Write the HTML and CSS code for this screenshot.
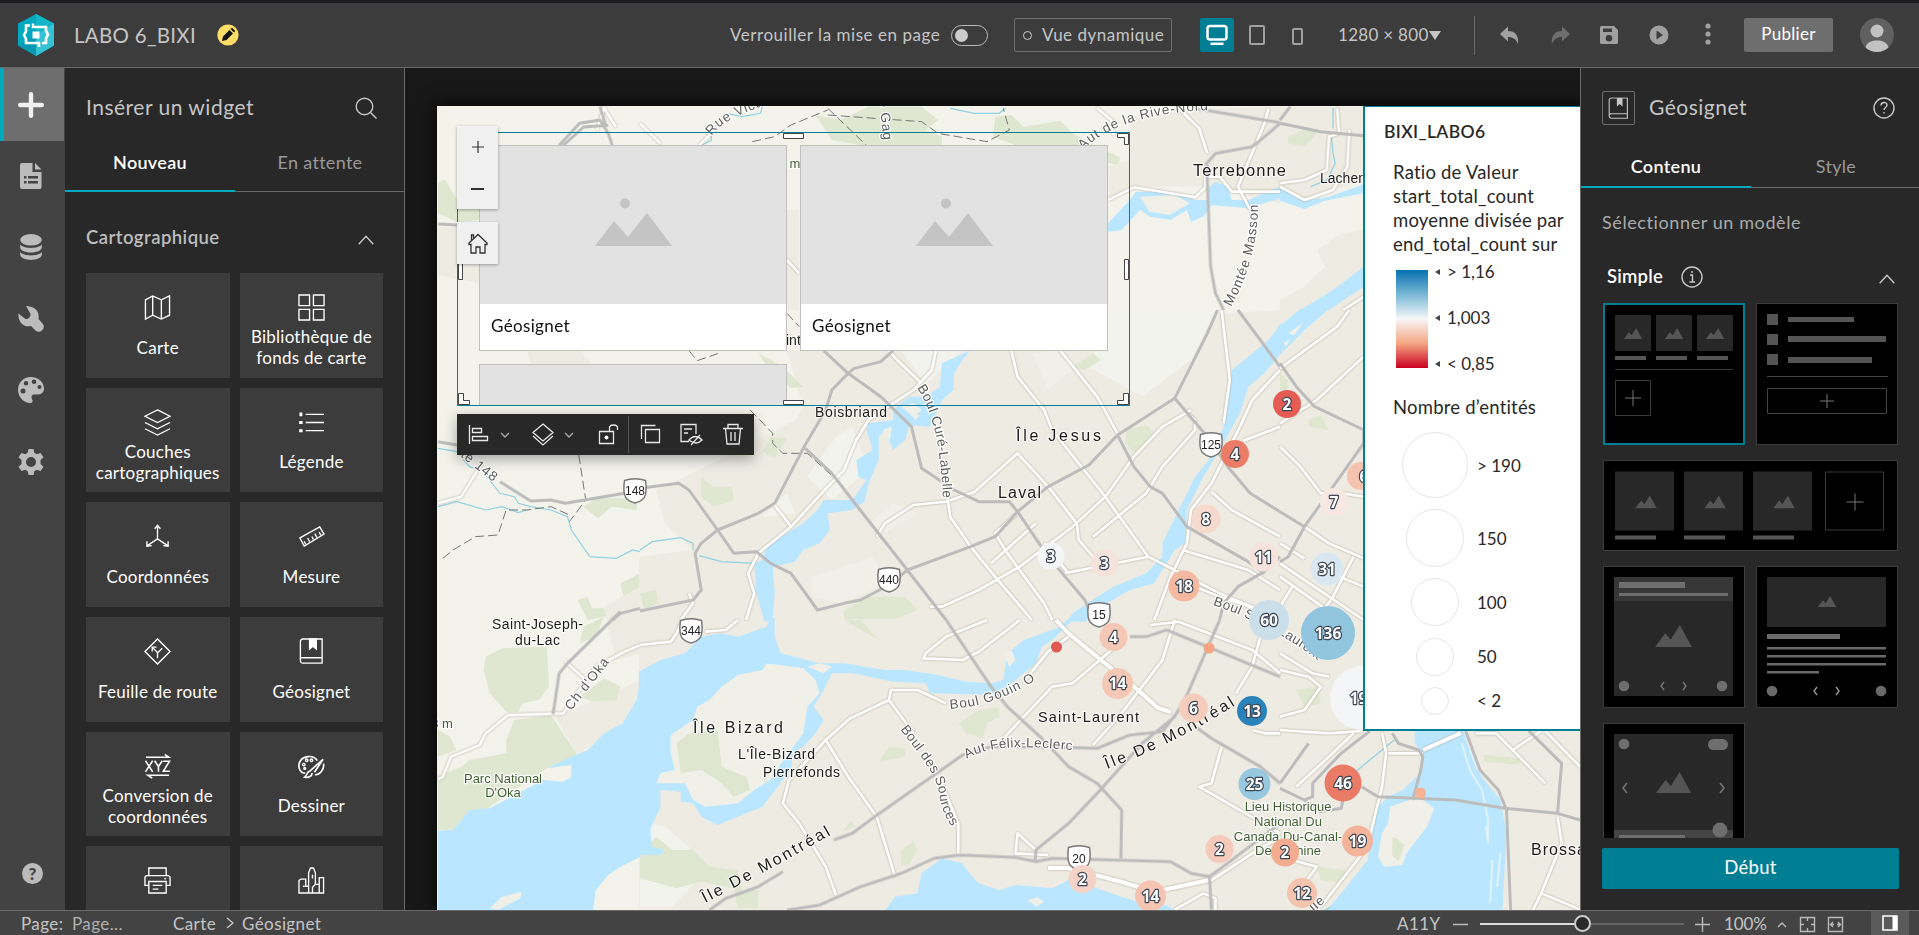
FILE: index.html
```html
<!DOCTYPE html>
<html lang="fr">
<head>
<meta charset="utf-8">
<title>LABO 6_BIXI</title>
<link rel="stylesheet" href="styles.css">
</head>
<body>
<svg class="defs" width="0" height="0">
  <symbol id="mini" viewBox="0 0 20 12"><path d="M0 12 5.500 4.500 8.500 8 13.500 0 20 12z"/></symbol>
  <symbol id="shield" viewBox="-12 -12 24 26"><path d="M-10.500-9.500Q0-13 10.500-9.500 12.500 5 8 9 5 12 0 13-5 12-8 9-12.500 5-10.500-9.500z" fill="#fff" stroke="#777" stroke-width="1.500"/></symbol>
  <symbol id="book" viewBox="0 0 26 28"><path d="M4 1h20v25H4a2.500 2.500 0 0 1-2.500-2.500v-20A2.500 2.500 0 0 1 4 1zM1.500 22A2 2 0 0 1 4 20.500h20" fill="none" stroke="currentColor" stroke-width="1.400"/><path d="M11 1h7v10.500l-3.500-3-3.500 3z" fill="currentColor"/></symbol>
</svg>
<header class="top">
  <svg class="logo" viewBox="0 0 38 42"><path d="M19 0 37 9.500v22L19 42 1 31.500v-22z" fill="#00a9c0"/><path d="M19 0 37 9.500 19 21z" fill="#14b5c8"/><path d="M37 9.500v22L19 42V21z" fill="#35c3d3"/><path d="M1 31.500 19 21v21z" fill="#0899b2"/><path d="M16 9.500v3.500h13v4l2 3.500-2 4V29h-4M22 33v-4H9v-4l-2-4 2-3.500V11.500h4" fill="none" stroke="#fff" stroke-width="2.600"/><path d="M15.500 17.500h7v7h-7z" fill="#fff"/></svg>
  <span class="app-name">LABO 6_BIXI</span>
  <svg class="pencil" viewBox="0 0 22 22"><circle cx="11" cy="11" r="10.600" fill="#ffdd66"/><path d="m5 17 1-4.500 6.500-6.500 3.500 3.500L9.500 16zM13.500 5l1.500-1.200 3.200 3.200-1.200 1.500z" fill="#111"/></svg>
  <span class="lock-label">Verrouiller la mise en page</span>
  <span class="toggle"></span>
  <span class="live"><i></i>Vue dynamique</span>
  <span class="device on"><svg width="22" height="22" viewBox="0 0 22 22"><rect x="1.500" y="2" width="19" height="13.500" rx="2.500" fill="none" stroke="#fff" stroke-width="2.500"/><path d="M4.500 19.800h13" stroke="#fff" stroke-width="2.500"/></svg></span>
  <span class="tablet"></span><span class="phone"></span>
  <span class="res">1280 × 800</span><i class="caret"></i><i class="divider"></i>
  <svg class="ic undo" viewBox="0 0 20 18"><path d="M8 0v4.500c7 0 11 4 10 13-2-5-5-7-10-7V15L0 7.500z"/></svg>
  <svg class="ic redo" viewBox="0 0 20 18"><path d="M12 0v4.500C5 4.500 1 8.500 2 17.500c2-5 5-7 10-7V15l8-7.500z"/></svg>
  <svg class="ic save" viewBox="0 0 20 20"><path fill-rule="evenodd" d="M2.500 1H15l4 4v12.500a1.500 1.500 0 0 1-1.500 1.500h-15A1.500 1.500 0 0 1 1 17.500v-15A1.500 1.500 0 0 1 2.500 1zM4 3.500V7h9V3.500zM10 10a3.300 3.300 0 1 0 0 6.600 3.300 3.300 0 0 0 0-6.600z"/></svg>
  <svg class="ic play" viewBox="0 0 20 20"><path fill-rule="evenodd" d="M10 .5a9.500 9.500 0 1 0 0 19 9.500 9.500 0 0 0 0-19zM7.500 5.500l6.500 4.500-6.500 4.500z"/></svg>
  <svg class="ic dots" viewBox="0 0 6 22"><circle cx="3" cy="3" r="2.600"/><circle cx="3" cy="11" r="2.600"/><circle cx="3" cy="19" r="2.600"/></svg>
  <span class="publish">Publier</span>
  <svg class="avatar" viewBox="0 0 34 34"><circle cx="17" cy="17" r="17" fill="#606060"/><circle cx="17" cy="13" r="6.500" fill="#c2c2c2"/><path d="M5.500 29.500C7 24 12 22.500 17 22.500s10 1.500 11.500 7A17 17 0 0 1 17 34a17 17 0 0 1-11.500-4.500z" fill="#c2c2c2"/></svg>
</header>
<main class="work">
  <nav class="rail">
    <span class="rail-item active"><svg viewBox="0 0 26 26"><path d="M13 2.200v21.600M2.200 13h21.600" stroke="#f0f0f0" stroke-width="4.400" stroke-linecap="round"/></svg></span>
    <span class="rail-item"><svg viewBox="0 0 26 26"><path fill-rule="evenodd" d="M4 0h10.500v9h9v15a2 2 0 0 1-2 2H4a2 2 0 0 1-2-2V2a2 2 0 0 1 2-2zM17 0l6.500 6.500H17zM6 13v2.500h2.500V13zm4 0v2.500h10V13zM6 18v2.500h2.500V18zm4 0v2.500h10V18z"/></svg></span>
    <span class="rail-item"><svg viewBox="0 0 26 26"><ellipse cx="13" cy="5.800" rx="10.800" ry="5.800"/><path d="M2.200 10.500c3 4.500 18.600 4.500 21.600 0V14c-2 6-19.600 6-21.600 0zM2.200 18c3 4.500 18.600 4.500 21.600 0v3c-2 6.500-19.600 6.500-21.600 0z"/></svg></span>
    <span class="rail-item"><svg viewBox="0 0 26 26"><path d="M8 0C15 0 22 4 20.500 13L25 18c3 4-3 10-7 7l-5-5C5 22 0 15 .3 7.500L7.500 13c3 .5 5-2 5-5z"/></svg></span>
    <span class="rail-item"><svg viewBox="0 0 26 26"><path fill-rule="evenodd" d="M13 0C5 0 0 6 0 13s6 13 12 13c3 0 3-2 2-4-1.500-3.500 1-5 3-4.500 5 .5 9-1 9-6C26 5 20 0 13 0zM8 4a2.300 2.300 0 1 1 0 4.600A2.300 2.300 0 0 1 8 4zm8-1.500a2.300 2.300 0 1 1 0 4.600 2.300 2.300 0 0 1 0-4.600zM21.500 8a2 2 0 1 1 0 4 2 2 0 0 1 0-4zM5 11.500a2.500 2.500 0 1 1 0 5 2.500 2.500 0 0 1 0-5z"/></svg></span>
    <span class="rail-item"><svg viewBox="0 0 26 26"><path fill-rule="evenodd" d="M10.500 0h5l.8 3.800 2.500 1.400 3.700-1.300L25.500 8.200 22.500 11v4l3 2.800-3 4.300-3.700-1.300-2.500 1.400-.8 3.800h-5l-.8-3.800-2.500-1.400-3.700 1.300L.5 17.800 3.500 15v-4L.5 8.200l3-4.300 3.700 1.300 2.500-1.400zM13 8a5 5 0 1 0 0 10 5 5 0 0 0 0-10z"/></svg></span>
    <span class="rail-help">?</span>
  </nav>
  <section class="insert">
    <div class="panel-title"><span>Insérer un widget</span><svg width="22" height="22" viewBox="0 0 22 22"><circle cx="9.500" cy="9.500" r="8.300"/><path d="m15.500 15.500 6 6"/></svg></div>
    <div class="tabs"><span class="tab sel">Nouveau</span><span class="tab">En attente</span></div>
    <div class="group-title"><span>Cartographique</span><svg width="16" height="10" viewBox="0 0 16 10"><path d="m.7 9.300 7.300-8 7.300 8"/></svg></div>
    <div class="cards">
      <div class="card"><svg viewBox="0 0 28 28"><path d="M1.500 6 9 2l9 4 8.500-4v20L18 26l-9-4-7.500 4zM9 2v20M18 6v20"/></svg><span>Carte</span></div>
      <div class="card"><svg viewBox="0 0 28 28"><path d="M1 1h11v11H1zM16 1h11v11H16zM1 16h11v11H1zM16 16h11v11H16z"/></svg><span>Bibliothèque de<br>fonds de carte</span></div>
      <div class="card"><svg viewBox="0 0 28 28"><path d="m14 1 13 6.500L14 14 1 7.500zM1 14l13 6.500L27 14M1 20.500 14 27l13-6.500"/></svg><span>Couches<br>cartographiques</span></div>
      <div class="card"><svg viewBox="0 0 28 28"><path d="M8 5.500h19M8 14h19M8 22.500h19"/><path d="M1.200 14h3.600M1.200 22.500h3.600M1.500 6h3M3 3.500v3" stroke-width="3"/></svg><span>Légende</span></div>
      <div class="card"><svg viewBox="0 0 28 28"><path d="M14 3v13.500L3.500 23.500M14 16.500l10.500 7M11 6l3-3.500L17 6M3 19v5l5-.5M25 19v5l-5-.5"/></svg><span>Coordonnées</span></div>
      <div class="card"><svg viewBox="0 0 28 28"><path d="M2 15.500 22.500 4 27 11.500 6.500 24zM8 22l-1.600-3M12 19.500l-2-4M16 17l-1.600-3M19.500 15l-2-4M23.500 12.500l-1.500-3"/></svg><span>Mesure</span></div>
      <div class="card"><svg viewBox="0 0 28 28"><path d="m14 1 13 13-13 13L1 14zM14 21v-6l-4.500-4.500M8.500 14v-4.500H13M14 15.500l5-5"/></svg><span>Feuille de route</span></div>
      <div class="card"><svg viewBox="0 0 26 28"><use href="#book"/></svg><span>Géosignet</span></div>
      <div class="card"><svg viewBox="0 0 28 28"><path d="M2 4.500h24l-4.500-3M26 23H4l4.500 3M1.500 8 9 19.500M9 8 1.500 19.500M11 8l4 6 4-6M15 14v5.500M20 8.500h6.500l-6.500 10.500h7" stroke-width="1.600"/></svg><span>Conversion de<br>coordonnées</span></div>
      <div class="card"><svg viewBox="0 0 28 28"><path d="M20 8C16 1 4 3 1.500 10-.5 16 3 21 7.500 21M12 19 26 6.500 17 20M12 19c-3 0-2 4-5 6 4 1 8-1 7.500-4.500M26.500 11c1 6-4 12-9 11.500" stroke-width="1.700"/><circle cx="6" cy="12" r="1.300"/><circle cx="9" cy="7.500" r="1.300"/><circle cx="14" cy="7.500" r="1.300"/><circle cx="7" cy="16" r="1"/></svg><span>Dessiner</span></div>
      <div class="card"><svg viewBox="0 0 28 28"><path d="M5 9V1h18v8M5 19H1V10.500l1.500-1.500h23l1.500 1.500V19h-4M5 15h18v12H5zM9 19h10M9 23h6M21 12h2"/></svg></div>
      <div class="card"><svg viewBox="0 0 28 28"><path d="M1 27V14l2-1.500h5V20h3V6l2-5h3l2 5v12h4v-7h4.500v16zM11 20v7M5 20h2M15 27v-6l3-3M22 18v9M15 8v4"/></svg></div>
    </div>
  </section>
  <section class="canvas">
    <div class="map">
    <svg width="1143" height="804" viewBox="437 106 1143 804">
      <defs>
        <path id="p1" d="M712 136Q722 118 770 104"/><path id="p2" d="M879 100 886 160"/><path id="p3" d="M1083 150Q1118 114 1210 110"/><path id="p4" d="M1231 307Q1258 258 1258 205"/>
        <path id="p5" d="M917 388Q940 420 943 500"/><path id="p6" d="M460 456 506 492"/><path id="p7" d="M571 711 611 660"/><path id="p8" d="M705 903Q770 870 846 826"/><path id="p9" d="M1107 769Q1180 742 1248 697"/>
        <path id="p10" d="M950 709Q995 706 1034 681"/><path id="p11" d="M900 729C925 762 938 776 940 800Q945 822 960 835"/><path id="p12" d="M967 759C990 743 1040 746 1085 752"/><path id="p13" d="M1213 605C1250 617 1300 642 1334 674"/>
      </defs>
      <rect x="437" y="106" width="1143" height="804" fill="#f3f3ec"/>
      <g class="areas">
        <g transform="scale(.40816 .33333)">
          <path class="green" d="M1073 550l17-12 30 62 55 15v45l-55 5-47-25z"/><path class="urban" d="M1073 680h102v170l-102-25z"/>
        </g>
        <g transform="translate(640 0) scale(.40816 .33333)">
          <path class="green" d="M430 345l60 15 70-40h130l40 40-30 30 40 20v30H560l-90-20zM870 350l40-5 30 35 90-18 30 38 60 40 55 30v30l-30-15-15-45H930l-65-30z"/>
          <path class="urban" d="M1200 360l120-30 248-10v290l-168-50h-200l-50 40-3-100 53-20zM360 630h30v300h-30z"/>
        </g>
        <g transform="translate(1280 0) scale(.40816 .33333)">
          <path class="urban" d="M-3 320h208v220L60 600-3 570zM205 690l-55 10-60 50 20 50-50 60-60 40v40h205z"/><path class="green" d="M20 410l50-30 20 20-30 40-40-10z"/>
        </g>
        <g transform="translate(0 310) scale(.40816 .33333)">
          <path class="green" d="M1430 590l30-25h100v35l-60-10-35 35zM1520 820l48-30v80h-38zM1415 870l25-10 10 35h45l5 20-60 15z"/><path class="urban" d="M1290 120h130l30 42h-150z"/>
        </g>
        <g transform="translate(640 310) scale(.40816 .33333)">
          <path class="urban" d="M360 122 1000 40 1570 0v932H-2V740l132-20-70-80-20-100 70-40 130-80 140-90 20-40z"/>
          <path class="farm" d="M1150 0h260l-60 150-120 110-130-90zM640 122h150l-90 100zM520 350l40 130-90 90-60-70 70-120zM300 620l60-70 20 60z"/>
          <path class="farm faint" d="M560 640l60-60 60 30-80 60zM960 130l60-10 40 60-60 60zM420 800l150-60 40 80-120 60-70-20z"/>
          <path class="green" d="M150 500l30 30h45l5 40-50 20-30-30zM500 900l60-40h90l30 40-60 30H500zM1190 360l50-15 20 25-50 60-20-30zM0 850l40-10 5 40-35 20zM1060 170l50-40 20 20-40 30zM290 130l60 40 50 60-30 5-50-50zM320 380l40 5-30 60-30-20z"/>
        </g>
        <g transform="translate(1280 310) scale(.40816 .33333)"><path class="urban" d="M-3-3h208v936H-3z"/><path class="green" d="M0 190l20 20v30H0zM70 330l30-15 20 45-50-10z"/></g>
        <g transform="translate(0 620) scale(.40816 .33333)">
          <path class="urban" d="M1360 290l140-70 68-40v60l-43 70-110 95zM1480-40l88-60V100l-60 20z"/>
          <path class="green" d="M1190 110l40-25 110-5 5 120-25 40-40 10-10 25h-30l-40-55-15-70zM1260 300l90-15 35 65 30 55-75 40-140 115-90 70h-37V470l57-30 20-20 90-20v-40zM1420 230l60-55 40 25-10 40-60 5zM1430 20l50-30-20 60-40 20zM1073 330l30 20 15 40-45 20z"/>
        </g>
        <g transform="translate(640 620) scale(.40816 .33333)">
          <path class="urban" d="M-2-2h1574v874H-2z"/>
          <path class="farm" d="M0 600l60 20 60 60 20 100-60 80H0z"/>
          <path class="green" d="M780 310l50-40 50-8v28l-30 20-10 45-40-15zM585 425l25-45 40 5v25zM640 690l30-27 10 27-25 50-15-5zM495 635l25-35 5 20zM0 700l40-50 40 40h50l40 50 70 10 10 60h40v55h-50l-10-60-80-20-60 20-90-30zM500 0h40l45 60z"/>
        </g>
        <g transform="translate(1280 620) scale(.40816 .33333)">
          <path class="urban" d="M-3-3h743v875H-3z"/><path class="green" d="M500 405l90 10-5 20-85-10zM90 740l70 10-5 40-55-10zM40 210l50-10 10 50-40 10z"/>
        </g>
      </g>
      <g class="water">
        <g transform="translate(640 0) scale(.40816 .33333)"><path d="M1147 670l53-70 15-25h85l60 25h30l5-40 15-15 30 15 10 40h40l78-40v35l-78 30-90-10-20 35-30 15-10-35-40 30-50-10-25-20-45 60-33 5z"/><path class="hole" d="M1225 590l85-5 38 25-50 35-50-10z"/><path class="stream" d="M760 325l60 15h60l15-15M210 340l40 10 45-10 5-20M150 436l25-15v-15"/></g>
        <g transform="translate(1280 0) scale(.40816 .33333)"><path d="M-3 562l33 20 30 20 60-12 85-37v27l-95 22-50 25-60-25zM205 800l-75 70-80 60h70l85-70z"/><path class="stream" d="M130 325v60M125 400l5 60 5 30-20 50-40 20"/></g>
        <g transform="translate(1280 310) scale(.40816 .33333)"><path d="M50-3h70L60 60 20 110-3 135V50z"/><path class="hole" d="M20 70l35-30-20 35zM10 100l15-15-10 25z"/></g>
        <g transform="translate(0 310) scale(.40816 .33333)"><path class="stream" d="M1073 415l47 10 30 45 30 10 45 70 35 10 10 20 30 10 50 10 40 20 10 40 45 80 65 5 40-25 18 5M1073 590l47-15 70 25 40-10 40 18 20-8"/></g>
        <g transform="translate(640 310) scale(.40816 .33333)">
          <path d="M1572 36l-32 54-60 60-30 30-10 100-10 70-30 90-40 60-40 100-40 100v40l-40 50-80 40-40 30-60 50-15 25h45l40-45 70-50 60-20 50-100 25-20 5-100 40-100 30-60 60-130 20-80 40-40 42-62z"/>
          <path d="M808 122l-33 18-35 20-5 70-35 30h-40l-40 40v30l-60 10-5 20 15 60-40 30 5 50 20 10-35 60h-70l-15 30-35 40-40 30-50 40-10 40-20 10 5 90 20 84h20l5-84-5-80 55-15 20-35 40-20 25-40-5-50 60-10 30-25 10-55 25-70v-70l15-20 20 60 30-30 10-45 50 5 30-80 28-30 2-50 20-40z"/>
          <path class="hole" d="M640 290l30-12 20 22-20 20zM690 285l20-10 10 18zM595 360l22-10-5 40zM660 310l25 5-10 15z"/>
          <path class="stream" d="M0 720l30-25 70-12 30 17v20M145 737l55 18 80 5"/>
        </g>
        <g transform="translate(0 620) scale(.40816 .33333)"><path d="M1570 170l-10 70-35 70-45 30-40 50-40 20-60 35 60-10v35l-20 15-50-5-130 85-50 5-40 60-37 2v238h380l7-60 30-45 30-25 50-30z"/><path class="hole" d="M1200 865l30-35 48-15-3 20-55 35z"/></g>
        <g transform="translate(640 620) scale(.40816 .33333)">
          <path d="M-3 155l53-35 60-20 40-50 50-10 40 10 70-30 10-25h10v55l15 50 95 30h60l100 20h50l80 15 70 20 60 5 30-10 5-40 5-40 40-40 90-40 15-20h15l-50 60-25 20-15 50-40 40-30 30-30 25-160-5-10-30-80-5-100-25h-50l-20 50-25 50 25 40-20 40-30 40-25 20-5 50-20 30-50 80-110 55-40-25-20-40-30-5v-30l-50-5v50l-25 70 5 50 30 10-10 15H-3z"/>
          <path class="hole" d="M310 130l90 15 30 35 10 40-30 40-10 80-30 50-30 50-10 30-50 40-40 40-80 10-30-20-20-50H40l10-30 35-10-10-50v-55l55-45 10-40 30-20 30-40 40-35 60-15z"/>
          <path class="green" d="M90 370l30-30 70-10 10 110 60 30 10 40-40 20-30-40-50-40-50 10z"/><path class="hole" d="M410 140l30-10 30 10-20 20zM890 100l20-10 10 30-15 20z"/>
          <path d="M600 872l25-42 55-10 10-60 50-45 50 15 20 35 20 25 50 20 40-15 90 10 40-25 60 20 70 30 50 20 60 5 20 17z"/><path class="hole" d="M950 840l25-8 15 15-20 12z"/>
        </g>
        <g transform="translate(1280 620) scale(.40816 .33333)">
          <path d="M330 333h120l5 27 25 80 20 40 40 60 15 100-10 230H115l35-50 65-100 5-40 20-120 25-30 35-20 45-50 5-60-20-30z"/>
          <path class="hole" d="M270 560l70-30 38 35-18 55-50 80-10 35-45 5-15-30 10-70 15-30z"/><path class="green" d="M275 650l10 5 20 20-15 50-15-20z"/><path class="foam" d="M445 370l20 80 30 60 15 90v70M465 390l20 60M520 720l-5 130M540 700l-8 100M505 620l5 50"/>
          <path class="stream" d="M280 360l-95 95M95 880l30-20"/>
        </g>
      </g>
      <g class="dash">
        <path transform="translate(640 0) scale(.40816 .33333)" d="M275 425l55-15 40-35 90-45M460 325l95 111M460 345l230 20 40 35 120 25 55-35-15-65"/>
        <path transform="translate(0 310) scale(.40816 .33333)" d="M1085 745l25-25 55-40 55-5 20-75h50l60-10 45 25M1418 435l17 135-40 65"/>
        <path transform="translate(640 310) scale(.40816 .33333)" d="M270 300l55 70v30l25 30h60l90 100M120 122l20 30 60-25M360 10l30 40"/>
      </g>
      <g class="white">
        <path d="M616 127 604 108 597 130" />
        <path transform="translate(640 0) scale(.40816 .33333)" d="M0 370l50 60M145 436l25-31 20-25M1320 325l50 60 20 75M1147 600l63-38 150 30 25-30v-32h35l30 45h118M1540 325l-10 45-65 190 35 80M360 780l30 40M1120 325l40 40v40"/>
        <path transform="translate(1280 0) scale(.40816 .33333)" d="M140 325l5 75-25 10-5 100-55 30-60 10M170 390l-5 110-35 70-70 30-60-40M205 890l-50 40"/>
        <path transform="translate(640 310) scale(.40816 .33333)" d="M610 122l20 28 60 70M1030 122l90 138 50 110M910 122l15 78 65 100 20 60 65 100 65 100 105 180 65 40 110 70 148 75M725 122l-10 58-45 60-50 40-60 50-30 60-30 90-40 50-90 120-80 80-25 60 15 60-20 80M580 680l20-40 70-55 80-10 70-30 105-115 75 100 70 110 5 50 35 50M745 490l15 130 50 90 60 90 90 130M1350 300l-70 50-70 90-70 120-80 90-130 120-100 70-90 50h-30M1425 0l20 210-15 130M1568 180l-68 90-30 80-70 170-50 80-10 100-40 100-40 130M1400 545l50 55 118 80M1568 350l-90 42M925 610l-55 60 30 60 90 150 20 50M970 640l-110 120M1040 790l205-50M100 930l30-50-10-30M330 585l40 65M990 700l60 90M1340 310l20 20v30l-80 110-40 80-130 130M1300 800l120 60 148 60M1330 720l160 60 78 60"/>
        <path transform="translate(1280 310) scale(.40816 .33333)" d="M170 0l-30 50L0 175M205 140L90 270 0 340M0 410l50 60 50 80h50l55 10M0 700l60 45M60 650l60 50 85 45M180 740l-50 120-40 70M0 760l205 170M0 800l150 130M30 830l-30 60M205 830l-60-30"/>
        <path transform="translate(0 310) scale(.40816 .33333)" d="M1180 460l-50 100-57 20"/>
        <path transform="translate(0 620) scale(.40816 .33333)" d="M1568 75l-38 20-70 45-80 140-135 5-55 55-15 35-70 35-20 60-12 8M1385 125l55 60"/>
        <path transform="translate(640 620) scale(.40816 .33333)" d="M0 75l75-10 15-25 10-30M160 35l50-5 30-30M610 240l5-30h65l70 40M610 240l-95 55-60 65-90 120-15 70 40 60 65 130 25 85M455 360l55 110 70 120 45 180M610 240l60 100M735 480l45 130v95M930 0l-25 25-75 70-40 25-95-5 5-15 50-50L850 0M1050 50l-50 45-50 75-10 20M1310 0l-30 120-100 160-70 95M1160 85l-100 105-50 10-120 155M970 690l-45-50-5 60 80 5M1425 380l-25 110-30 10 198 140M1250 15l70-10 180 85 68 70M1520 50l-20 90-40 80M1310 870l70-50 30 15v35M1395 785l105-85 68-50M1500 330l30 10h38"/>
        <path transform="translate(1280 620) scale(.40816 .33333)" d="M0 150l70 20 30 30-40 70-60 20M0 330l120 10 80-7M250 340l10 60-10 100-20 100-15 80-115 180M480 340h50l120 150M640 333l-70 57M650 333l85 107M680 590l10 80-50 150 95 48M640 820l-20 50M0 710l90 30-30 50M265 400h85M180 340l-60 70-80 90M0 100l80 60 40 10"/>
        <path class="thick" d="M1056 620 1068 633 1101 660 1138 690 1158 708 1171 712M1048 868 1068 868 1122 882 1154 892 1209 880M1423 750 1461 733"/>
      </g>
      <g class="grey">
        <path transform="scale(.40816 .33333)" d="M1370 436l50-66 50-10 20 40 10 36M1470 320l15 60M1073 672l47 3M1380 436l50-55 60-5"/>
        <path transform="translate(640 0) scale(.40816 .33333)" d="M1568 370l-28 30-40 40-90 20-22 30 10 310 12 80 20 50M1360 325l208 43"/>
        <path transform="translate(1280 0) scale(.40816 .33333)" d="M0 370l100 25 105 12M25 320L0 360"/>
        <path transform="translate(0 310) scale(.40816 .33333)" d="M1073 395l47 10M1225 515l75 58 50-3 35 10 145-30M1500 930l20-20 48-15"/>
        <path transform="translate(640 310) scale(.40816 .33333)" d="M450 122l60 68 80 70 75 90 25 125 80 65 60 35h75l20 30 75 135 90 130 20 60M620 122l-30 33-65 20-15 15-40 50-15 60-55 115-70 165-40 30-100 50-40 40-15 30 15 110-20 30-130 33M405 415l65 75 50 80 135 210 95 150M0 535l95-15 25 20 70 120 40 70 55-5 35 35 50 30 65 110 65-20 40-10 70-45 45-45 155-70 60-30 55-75 75-75 100-65 70-90 140-110 80-195 25-70M1170 375l40 95 40 60 30 20 60 100 150 105 40 35M1465 0l103 170M1310 265l80 115 50 90 55 80 73 55M1568 740l-38 45-65 45-35 50-10 50"/>
        <path transform="translate(1280 310) scale(.40816 .33333)" d="M0 160l40 70 45 60 95 55 25 15v40l-75 130-70 120-40 90-20 15M0 605l60 45"/>
        <path transform="translate(0 620) scale(.40816 .33333)" d="M1520-25l-130 155-20 30-15 123"/>
        <path transform="translate(640 620) scale(.40816 .33333)" d="M750 0l110 200 40 60 80 90 70 90 70 50 60 80-2 145M1420 0l-80 225-30 65-80 80-110 150-70 90-80 80-2 30M170 870l40-35 80-35 60-45M475 660l45-20 55-50 215-185 70-25 200 3 60 2 80-40 80-10 40-65M360 870l80-15 100-55 100-40 80-45 60-10 140 7 50 13 40-10 290 10 50 35 45 10 55-50 118-110M1360 320l40 35 120 85 48 50M1395 770l5 100M1200 50h40l50-20 110 55 168 85"/>
        <path transform="translate(1280 620) scale(.40816 .33333)" d="M275 340l15 30 50 20 10 20-5 40-20 90M0 505l60 35 20-10v-40l70-90 70-67M200 500l40 30 90 5 100 5 120 25 130 15 55 20M455 333l35 117 45 60 20 60 10 300M610 333l80 97-10 150M60 540l40 35 50-10 10-60M0 490l70-120"/>
      </g>
      <g class="road-label">
        <text><textPath href="#p1">Rue Vict</textPath></text><text><textPath href="#p2">e Gag</textPath></text><text><textPath href="#p3">Aut de la Rive-Nord</textPath></text><text><textPath href="#p4">Montée Masson</textPath></text>
        <text class="tight"><textPath href="#p5">Boul Curé-Labelle</textPath></text><text><textPath href="#p6">te 148</textPath></text><text><textPath href="#p7">Ch d'Oka</textPath></text><text><textPath href="#p10">Boul Gouin O</textPath></text>
        <text class="tight"><textPath href="#p11">Boul des Sources</textPath></text><text class="tight"><textPath href="#p12">Aut Félix-Leclerc</textPath></text><text class="tight"><textPath href="#p13">Boul Saint-Laurent</textPath></text><text x="1314" y="912" transform="rotate(-42 1314 912)">lle</text>
      </g>
      <g class="place">
        <text x="1193" y="176" font-size="16.500" textLength="93">Terrebonne</text><text x="1320" y="183" font-size="14" textLength="46">Lachen</text><text x="786" y="345" font-size="14">int</text>
        <text x="815" y="417" font-size="14" textLength="72">Boisbriand</text><text x="1016" y="441" font-size="16" textLength="85">Île Jesus</text><text x="998" y="498" font-size="16" textLength="43">Laval</text>
        <text x="492" y="629" font-size="14" textLength="91">Saint-Joseph-</text><text x="515" y="645" font-size="14" textLength="45">du-Lac</text><text x="693" y="733" font-size="16" textLength="90">Île Bizard</text>
        <text x="738" y="759" font-size="14" textLength="77">L'Île-Bizard</text><text x="763" y="777" font-size="14" textLength="77">Pierrefonds</text><text x="1038" y="722" font-size="14.500" textLength="101">Saint-Laurent</text><text x="1531" y="855" font-size="16" letter-spacing="1">Brossard</text>
        <text class="wide"><textPath href="#p8">Île De Montréal</textPath></text><text class="wide"><textPath href="#p9">Île De Montréal</textPath></text>
      </g>
      <g class="park"><text x="503" y="783">Parc National</text><text x="503" y="797">D'Oka</text><text x="1288" y="811">Lieu Historique</text><text x="1288" y="826">National Du</text><text x="1288" y="841">Canada Du-Canal-</text><text x="1288" y="855">De Lachine</text><text x="795" y="168">m</text><text x="442" y="728">3 m</text></g>
      <g class="shields">
        <use href="#shield" x="623" y="478" width="24" height="26"/><text x="635" y="495">148</text><use href="#shield" x="877" y="567" width="24" height="26"/><text x="889" y="584">440</text><use href="#shield" x="679" y="618" width="24" height="26"/><text x="691" y="635">344</text>
        <use href="#shield" x="1199" y="432" width="24" height="26"/><text x="1211" y="449">125</text><use href="#shield" x="1087" y="602" width="24" height="26"/><text x="1099" y="619">15</text><use href="#shield" x="1067" y="845" width="24" height="26"/><text x="1079" y="863">20</text>
      </g>
      <g class="clusters">
        <circle cx="1362" cy="698" r="32" fill="#f3f5f6"/><circle cx="1287" cy="404" r="14" fill="#e45c53"/><circle cx="1235" cy="454" r="14" fill="#ea7c68"/><circle cx="1361" cy="476" r="14" fill="#f6c3ae"/><circle cx="1334" cy="502" r="14" fill="#f7e8e3"/><circle cx="1206" cy="519" r="14.500" fill="#f6dacd"/><circle cx="1051" cy="556" r="13.500" fill="#f4f5f6"/><circle cx="1104.500" cy="563" r="14" fill="#f6e3dc"/><circle cx="1263.500" cy="557" r="14.500" fill="#f7e3dc"/><circle cx="1327" cy="569" r="16.500" fill="#d9e7f0"/><circle cx="1184" cy="586" r="15.500" fill="#f4b9a0"/><circle cx="1269" cy="620" r="20" fill="#cbdfeb"/><circle cx="1328" cy="633" r="27" fill="#92c5de"/><circle cx="1113.500" cy="637" r="14" fill="#f5c8b6"/><circle cx="1117.500" cy="683.500" r="15.500" fill="#f5c8b6"/><circle cx="1193.500" cy="708" r="14.500" fill="#f6cdbd"/><circle cx="1252" cy="711" r="15" fill="#2a84bb"/><circle cx="1254.500" cy="784" r="16" fill="#98c8e0"/><circle cx="1343" cy="783" r="18.500" fill="#e97b67"/><circle cx="1357.500" cy="841" r="15.500" fill="#f4b499"/><circle cx="1219.500" cy="849" r="14" fill="#f6cab9"/><circle cx="1285" cy="852.500" r="14" fill="#f4ac90"/><circle cx="1302" cy="893" r="15" fill="#f5c4af"/><circle cx="1082.500" cy="879" r="14" fill="#f4d2c5"/><circle cx="1150.500" cy="896" r="15.500" fill="#f5c5b2"/>
        <circle cx="1056.500" cy="647" r="5.500" fill="#e05a55"/><circle cx="1209" cy="648" r="5.500" fill="#f5a582"/><circle cx="1420.500" cy="793" r="5.500" fill="#f5b294"/>
        <text x="1363" y="704">193</text><text x="1287" y="410">2</text><text x="1235" y="460">4</text><text x="1364" y="482">6</text><text x="1334" y="508">7</text><text x="1206" y="525">8</text><text x="1051" y="562">3</text><text x="1104.500" y="569">3</text><text x="1263.500" y="563">11</text><text x="1327" y="575">31</text><text x="1184" y="592">18</text><text x="1269" y="626">60</text><text x="1328" y="639">136</text><text x="1113.500" y="643">4</text><text x="1117.500" y="689">14</text><text x="1193.500" y="714">6</text><text x="1252" y="717">13</text><text x="1254.500" y="790">25</text><text x="1343" y="789">46</text><text x="1357.500" y="847">19</text><text x="1219.500" y="855">2</text><text x="1285" y="858">2</text><text x="1302" y="899">12</text><text x="1082.500" y="885">2</text><text x="1150.500" y="902">14</text>
      </g>
    </svg>
    </div>
    <div class="bookmarks">
      <div class="bm"><div class="pic"><svg width="78" height="48" viewBox="0 -8 78 48"><circle cx="30" cy="-2.500" r="5"/><path d="M0 40 19 15 33 31 52 7 77 40z"/></svg></div><span>Géosignet</span></div>
      <div class="bm"><div class="pic"><svg width="78" height="48" viewBox="0 -8 78 48"><circle cx="30" cy="-2.500" r="5"/><path d="M0 40 19 15 33 31 52 7 77 40z"/></svg></div><span>Géosignet</span></div>
      <div class="bm"><div class="pic"></div></div>
    </div>
    <svg class="handles" width="674" height="276" viewBox="457 131 674 276"><path d="M457.500 132.500h672v273h-672z" fill="none" stroke="#007f94"/><g fill="#fff" stroke="#444"><path d="M783.500 133.500h20v5h-20zM783.500 400.500h20v4h-20zM1124.500 259.500h4v20h-4zM458.500 259.500h4v20h-4zM1117.500 133.500h11v11h-4v-7h-7zM458.500 393.500v11h11v-4h-6v-7zM1128.500 393.500v11h-11v-4h6v-7z"/></g></svg>
    <div class="zoomer"><svg width="41" height="83" viewBox="0 0 41 83"><path d="M21 15v12M15 21h12" stroke="#333" stroke-width="1.200"/><path d="M14 63h13" stroke="#333" stroke-width="2"/></svg></div>
    <div class="home"><svg width="20" height="21" viewBox="0 0 20 21"><path d="M1 10 10 1.500 19 10v1.500h-2V20h-5v-6H8v6H3v-8.500H1zM3.500 7V2h2v3" fill="none" stroke="#333" stroke-width="1.300"/></svg></div>
    <div class="tools"><svg width="297" height="41" viewBox="457 414 297 41"><g fill="none" stroke="#e8e8e8" stroke-width="1.300"><path d="M469.500 425v19M472.500 428.500h9v4h-9zM472.500 436.500h15v4h-15zM543 424l10 8.500-10 8.500-10-8.500zM533 436l10 9 10-9M599.500 431.500h14v12h-14zM609.500 431v-3c0-4 8-4 8 0v2M645.500 429.500h14v13h-14zM641.500 439v-13.500h14M696 434v-9.500h-15v17h8M684 429h8M684 433h4M689 440q6-7 13 0-6 6-13 0zM691 445l9-10M723 428.500h20M728 428v-3.500h10v3.500M725.500 429l1.500 15h12l1.500-15M731 432v9M735 432v9"/><path d="m501 433 4 4 4-4M565 433l4 4 4-4" stroke="#aaa"/></g><circle cx="606.500" cy="437.500" r="2" fill="#fff"/><path d="M628.500 416v37" stroke="#555"/></svg></div>
    <div class="legend">
      <b>BIXI_LABO6</b>
      <p>Ratio de Valeur<br>start_total_count<br>moyenne divisée par<br>end_total_count sur</p>
      <div class="ramp"><i></i><div><span>&gt; 1,16</span><span>1,003</span><span>&lt; 0,85</span></div></div>
      <h4>Nombre d’entités</h4>
      <div class="size s1"><i></i><span>&gt; 190</span></div><div class="size s2"><i></i><span>150</span></div><div class="size s3"><i></i><span>100</span></div><div class="size s4"><i></i><span>50</span></div><div class="size s5"><i></i><span>&lt; 2</span></div>
    </div>
  </section>
  <aside class="props">
    <div class="props-head"><span class="boxed"><svg width="21" height="23" viewBox="0 0 26 28"><use href="#book"/></svg></span><span class="name">Géosignet</span><svg class="q" width="22" height="22" viewBox="0 0 22 22"><circle cx="11" cy="11" r="10" /><path d="M8 8.500c0-4 6-4 6-.5 0 2.500-3 2.500-3 5M11 15v1.500"/></svg></div>
    <div class="tabs"><span class="tab sel">Contenu</span><span class="tab">Style</span></div>
    <div class="choose">Sélectionner un modèle</div>
    <div class="simple"><span>Simple</span><svg width="22" height="22" viewBox="0 0 22 22"><circle cx="11" cy="11" r="10"/><path d="M9 9h2.500v7M8.500 16h5.500M11 5v2"/></svg><svg class="chev" width="16" height="10" viewBox="0 0 16 10"><path d="m.7 9.300 7.300-8 7.300 8"/></svg></div>
    <div class="templates">
      <svg class="t sel" viewBox="0 0 142 142"><g fill="#282828"><path d="M12 12h36v36H12zM53 12h36v36H53zM94 12h36v36H94z"/></g><g fill="#555"><use href="#mini" x="20" y="25" width="20" height="11"/><use href="#mini" x="61" y="25" width="20" height="11"/><use href="#mini" x="102" y="25" width="20" height="11"/><path d="M12 53h31v4H12zM53 53h31v4H53zM94 53h31v4H94z"/></g><path d="M12 66.500h118M12.500 77.500h35v35h-35z" fill="none" stroke="#3a3a3a"/><path d="M30 87v16M22 95h16" stroke="#777"/></svg>
      <svg class="t" viewBox="0 0 142 142"><path d="M11 11h11v11H11zM11 31h11v11H11zM11 51h11v11H11zM32 14h66v5H32zM32 33h98v6H32zM32 54h84v6H32z" fill="#555"/><path d="M11 73.500h121M11.500 85.500h119v25h-119z" fill="none" stroke="#444"/><path d="M71 91v14M64 98h14" stroke="#777"/></svg>
      <svg class="t wide" viewBox="0 0 295 90"><path d="M12 11h59v59H12zM81 11h59v59H81zM150 11h59v59h-59z" fill="#282828"/><g fill="#555"><use href="#mini" x="30" y="35" width="26" height="13"/><use href="#mini" x="99" y="35" width="26" height="13"/><use href="#mini" x="168" y="35" width="26" height="13"/><path d="M12 75h41v4H12zM81 75h41v4H81zM150 75h41v4h-41z"/></g><path d="M222.500 11.500h58v58h-58z" fill="none" stroke="#3a3a3a"/><path d="M252 33v17M243.500 41.500h17" stroke="#777"/></svg>
      <svg class="t" viewBox="0 0 142 142"><path d="M11 11h119v119H11z" fill="#282828"/><path d="M11 11h119v24H11z" fill="#373737"/><g fill="#6e6e6e"><path d="M16 16h66v6H16zM16 27h109v3H16z"/><circle cx="21" cy="120" r="5.300"/><circle cx="119" cy="120" r="5.300"/></g><use href="#mini" x="51" y="59" width="39" height="22" fill="#555"/><path d="m61 116-3 4 3 4M80 116l3 4-3 4" fill="none" stroke="#777" stroke-width="1.400"/></svg>
      <svg class="t" viewBox="0 0 142 142"><path d="M11 11h119v50H11z" fill="#282828"/><use href="#mini" x="61" y="30" width="20" height="11" fill="#555"/><g fill="#6a6a6a"><path d="M11 68h73v5H11zM11 81h119v2.500H11zM11 89h119v2.500H11zM11 97h119v2.500H11zM11 105h52v2.500H11z"/><circle cx="16" cy="125" r="5.300"/><circle cx="125" cy="125" r="5.300"/></g><path d="m61 121-3 4 3 4M80 121l3 4-3 4" fill="none" stroke="#999" stroke-width="1.400"/></svg>
      <svg class="t" viewBox="0 0 142 142"><path d="M11 11h119v119H11z" fill="#282828"/><path d="M11 107h119v23H11z" fill="#444"/><g fill="#6e6e6e"><circle cx="21" cy="21" r="5.300"/><rect x="105" y="16" width="20" height="11" rx="5.500"/><circle cx="117" cy="107" r="7.500"/><path d="M16 112h66v6H16z"/></g><use href="#mini" x="51" y="49" width="39" height="21" fill="#555"/><path d="m24 60-4 5 4 5M117 60l4 5-4 5" fill="none" stroke="#777" stroke-width="1.500"/></svg>
    </div>
    <div class="start">Début</div>
  </aside>
</main>
<footer class="status">
  <span class="f1">Page:</span><span class="f2">Page...</span><span class="f3">Carte</span><svg class="gt" width="8" height="12" viewBox="0 0 8 12"><path d="m1 1 6 5-6 5"/></svg><span class="f4">Géosignet</span>
  <span class="f5">A11Y</span><svg width="430" height="25" viewBox="1452 910 430 25" class="ctrl"><g fill="none" stroke="#bbb" stroke-width="1.400"><path d="M1453 923.500h15M1695 923.500h15M1702.500 916v15"/><path d="M1480 923h95" stroke="#ddd" stroke-width="2"/><path d="M1590 923h94" stroke="#666" stroke-width="2"/><circle cx="1582.500" cy="922.500" r="7.500" fill="#282828" stroke="#ccc" stroke-width="2"/><path d="m1778 926 4-4 4 4M1800.500 916.500h14v14h-14zM1807.500 916v4M1807.500 927v4M1800 923.500h4M1811 923.500h4M1828.500 916.500h14v14h-14zM1831 923.500h3M1837 923.500h3M1833 921l-2.500 2.500 2.500 2.500M1838 921l2.500 2.500-2.500 2.500"/></g><text x="1724" y="929" textLength="43">100%</text></svg>
  <span class="dock"><svg width="16" height="16" viewBox="0 0 16 16"><path d="M1 1h14v14H1z" fill="none" stroke="#fff" stroke-width="1.600"/><path d="M10.500 1H15v14h-4.500z" fill="#fff"/></svg></span>
</footer>
</body>
</html>
```
FILE: styles.css
```css
* { box-sizing: border-box; }
body { margin: 0; width: 1919px; height: 935px; overflow: hidden; display: flex; flex-direction: column; background: #181818; color: #c5c5c5; font: 17px/21px Lato, "Open Sans", sans-serif; }
svg { display: block; flex: none; }
span, i { flex: none; white-space: nowrap; font-style: normal; }
.defs { position: absolute; }

.top { height: 68px; flex: none; display: flex; align-items: center; background: #3c3c3c; border-top: 3px solid #1c1c22; border-bottom: 1px solid #6a6a6a; }
.logo { width: 38px; height: 42px; margin-left: 17px; }
.app-name { width: 125px; margin-left: 19px; font-size: 20.500px; letter-spacing: .3px; padding-top: 1px; }
.pencil { width: 22px; height: 22px; margin-left: 18px; }
.lock-label { width: 221px; margin-left: 491px; letter-spacing: .54px; padding-bottom: 1px; }
.toggle { width: 37px; height: 21px; border: 1.500px solid #bbb; border-radius: 11px; display: flex; align-items: center; padding-left: 3px; }
.toggle::before { content: ""; width: 13px; height: 13px; border-radius: 50%; background: #cdcdcd; }
.live { width: 158px; height: 34px; margin-left: 26px; border: 1px solid #6e6e6e; border-radius: 2px; display: flex; align-items: center; padding: 0 0 1px 8px; letter-spacing: .5px; }
.live i { width: 9px; height: 9px; border: 1.300px solid #ccc; border-radius: 50%; margin: 2px 10px 0 0; }
.device { width: 34px; height: 34px; margin-left: 28px; background: #007f94; border-radius: 2px; display: grid; place-items: center; }
.tablet { width: 16px; height: 20px; margin-left: 15px; border: 2px solid #a0a0a0; border-radius: 2px; }
.phone { width: 11px; height: 17px; margin: 3px 0 0 27px; border: 2px solid #a0a0a0; border-radius: 2px; }
.res { width: 91px; margin-left: 35px; letter-spacing: .3px; padding-bottom: 1px; }
.caret { border: 6px solid transparent; border-top: 9px solid #c5c5c5; border-bottom: 0; }
.divider { width: 1px; height: 39px; background: #6a6a6a; margin-left: 33px; }
.ic { fill: #a0a0a0; }
.undo { width: 20px; height: 19px; margin-left: 25px; }
.redo { width: 20px; height: 19px; margin-left: 30px; fill: #6e6e6e; }
.save { width: 20px; height: 20px; margin-left: 29px; }
.play { width: 20px; height: 20px; margin-left: 30px; }
.dots { width: 6px; height: 22px; margin: -2px 0 0 36px; }
.publish { width: 89px; height: 34px; margin-left: 33px; background: #6e6e6e; color: #fff; border-radius: 2px; text-align: center; line-height: 32px; letter-spacing: .3px; }
.avatar { width: 34px; height: 34px; margin-left: 27px; }

.work { height: 842px; flex: none; display: flex; }
.rail { width: 65px; background: #434343; display: flex; flex-direction: column; }
.rail-item { height: 71.500px; display: flex; align-items: center; justify-content: center; padding: 0 3px 2px 0; }
.rail-item.active { height: 73px; margin-right: 1px; border-left: 4px solid #00a9bd; background: #6e6e6e; padding: 0 6px 0 0; }
.rail-item svg { width: 26px; height: 26px; fill: #bcbcbc; }
.rail-help { width: 21px; height: 21px; margin: auto 0 26px 22px; border-radius: 50%; background: #bbb; color: #434343; font-weight: 900; text-align: center; }
.insert { width: 340px; background: #282828; border-right: 1px solid #6a6a6a; overflow: hidden; }
.insert svg, .simple svg, .q, .gt { fill: none; stroke: #c8c8c8; stroke-width: 1.400; }
.panel-title { height: 80px; display: flex; justify-content: space-between; align-items: center; padding: 0 27px 0 21px; font-size: 21px; letter-spacing: .5px; }
.panel-title span { padding-bottom: 3px; }
.tabs { display: flex; height: 44px; border-bottom: 1px solid #6a6a6a; }
.tab { width: 170px; height: 44px; text-align: center; line-height: 28px; color: #999; font-size: 18px; letter-spacing: .3px; }
.tab.sel { color: #fff; font-weight: 600; border-bottom: 2px solid #00a9bd; }
.group-title { height: 81px; display: flex; justify-content: space-between; align-items: center; padding: 12px 30px 0 21px; font-weight: 600; color: #bdbdbd; font-size: 18.500px; letter-spacing: .45px; }
.group-title span { padding-bottom: 3px; }
.group-title svg { margin-top: 2px; }
.cards { display: grid; grid-template-columns: 143.500px 143.500px; grid-auto-rows: 104.500px; gap: 10.200px; padding-left: 21px; }
.card { background: #3c3c3c; color: #fff; display: flex; flex-direction: column; align-items: center; padding-top: 21px; font-size: 17px; letter-spacing: .25px; }
.card svg { width: 27px; height: 27px; stroke: #fff; color: #fff; }
.card span { height: 42px; margin-top: 5px; display: flex; align-items: center; text-align: center; }

.canvas { width: 1175px; position: relative; overflow: hidden; background: #181818; }
.map { position: absolute; left: 32px; top: 38px; border: 1px solid #007f94; border-width: 1px 0 0 1px; box-shadow: 0 0 14px 4px #0009; }
.map svg { margin: -1px 0 0 -1px; }
.urban { fill: #eeebe3; } .farm { fill: #f3f3ed; } .faint { opacity: .5; } .green { fill: #e0e7d1; }
.water path { fill: #bae7ff; }
.water .hole { fill: #f1f0e8; } .water .green { fill: #dfe6cf; }
.water .stream, .water .foam { fill: none; stroke: #90d2e2; stroke-width: 1.200; vector-effect: non-scaling-stroke; }
.water .foam { stroke: #dff3fb; stroke-width: 2; }
.dash path, .white path, .grey path { fill: none; vector-effect: non-scaling-stroke; stroke-linejoin: round; }
.dash path { stroke: #777; stroke-width: 1; stroke-dasharray: 9 4; }
.white { filter: drop-shadow(0 0 .8px #aaa693); }
.white path { stroke: #fff; stroke-width: 2.600; }
.white .thick { stroke-width: 4; }
.grey path { stroke: #bcbcbc; stroke-width: 3; }
.map text { font-family: "Liberation Sans", Arial, sans-serif; paint-order: stroke; stroke: #fffffff0; stroke-width: 2.500px; stroke-linejoin: round; }
.road-label text { font-size: 13.500px; fill: #5c5c5c; letter-spacing: .9px; }
.road-label .tight { letter-spacing: .4px; }
.map .place text { fill: #1c1c1c; stroke: #ffffffa0; }
.place .wide { font-size: 16px; letter-spacing: 2.500px; }
.park text { font-size: 13px; fill: #3f5f30; text-anchor: middle; }
.map .shields text { font-size: 12px; fill: #222; stroke: none; text-anchor: middle; }
.map .clusters text { font: 700 15.500px "Open Sans", "Noto Sans", sans-serif; fill: #fff; stroke: #3c4654; text-anchor: middle; stroke-width: 2.400px; }

.bookmarks { position: absolute; left: 52px; top: 64px; width: 672px; height: 273px; padding: 13px 0 0 22px; display: grid; grid-template-columns: 308px 308px; grid-auto-rows: 206px; gap: 13px; align-content: start; overflow: hidden; color: #111; }
.bm { border: 1px solid #c0c0c0; background: #fff; }
.pic { height: 158px; background: #e2e2e2; fill: #c4c4c4; padding: 52px 0 0 115px; }
.bm span { display: block; padding: 11px 0 0 11px; letter-spacing: .35px; }
.handles { position: absolute; left: 52px; top: 63px; }
.zoomer, .home { position: absolute; left: 52px; top: 58px; width: 41px; height: 83px; background: #f0f0f0; box-shadow: 0 1px 3px #0005; }
.home { top: 154px; height: 42px; display: grid; place-items: center; }
.tools { position: absolute; left: 52px; top: 346px; background: #282828; box-shadow: 0 4px 14px #0005; }

.legend { position: absolute; left: 958px; top: 38px; width: 240px; height: 625px; background: #fff; border: 2px solid #007f94; border-top-width: 1px; color: #282828; padding: 14px 0 0 19px; }
.legend b { display: block; line-height: 22px; letter-spacing: .35px; font-size: 17.500px; font-weight: 600; }
.legend p { margin: 17px 0 0 9px; font-size: 18.500px; line-height: 24px; letter-spacing: .2px; white-space: nowrap; }
.ramp { display: flex; margin: 14px 0 0 12px; height: 98px; }
.ramp i { width: 32px; background: linear-gradient(#0571b0, #92c5de 30%, #f7f7f7 50%, #f4a582 75%, #ca0020); }
.ramp div { margin: -9px 0 -6px 7px; display: flex; flex-direction: column; justify-content: space-between; }
.ramp span::before { content: ""; display: inline-block; border: 3px solid transparent; border-right: 5px solid #444; border-left: 0; margin: 0 7px 3px 0; }
.legend h4 { margin: 27px 0 0 9px; font-size: 18.500px; letter-spacing: .2px; font-weight: 400; line-height: 24px; }
.size { display: flex; align-items: center; position: relative; padding-left: 93px; height: 60px; }
.size i { position: absolute; left: 51px; top: 50%; border: 1px solid #e6e6e6; border-radius: 50%; transform: translate(-50%, -50%); }
.s1 { height: 92px; } .s1 i { width: 66px; height: 66px; }
.s2 { height: 54px; } .s2 i { width: 58px; height: 58px; }
.s3 { height: 74px; } .s3 i { width: 48px; height: 48px; }
.s4 { height: 35px; } .s4 i { width: 38px; height: 38px; }
.s5 { height: 53px; } .s5 i { width: 28px; height: 28px; }

.props { width: 339px; background: #282828; border-left: 1px solid #6a6a6a; display: flex; flex-direction: column; }
.props-head { height: 80px; flex: none; display: flex; align-items: center; padding-left: 21px; font-size: 21px; letter-spacing: .5px; }
.boxed { width: 33px; height: 34px; border: 1px solid #6e6e6e; border-radius: 2px; display: grid; place-items: center; }
.name { width: 224px; margin-left: 14px; padding-bottom: 3px; }
.props .tabs { height: 40px; flex: none; } .props .tab { height: 40px; line-height: 36px; }
.choose { margin: 24px 0 0 21px; font-size: 18px; letter-spacing: .6px; color: #aaa; }
.simple { height: 22px; margin: 33px 0 0 26px; display: flex; align-items: center; color: #fff; font-weight: 600; font-size: 18.500px; }
.simple span { width: 74px; letter-spacing: .2px; padding-bottom: 1px; } .chev { margin: 3px 0 0 176px; }
.templates { height: 535px; margin: 15px 0 0 22px; overflow: hidden; display: grid; grid-template-columns: 142px 142px; gap: 15px 11px; align-content: start; }
.t { width: 142px; height: 142px; background: #000; outline: 1px solid #3c3c3c; outline-offset: -1px; }
.t.sel { outline: 2px solid #007f94; outline-offset: -2px; }
.t.wide { width: 295px; height: 91px; grid-column: span 2; }
.start { width: 297px; height: 41px; margin: 10px 0 0 21px; background: #007f94; color: #fff; border-radius: 2px; text-align: center; line-height: 39px; font-size: 18.500px; letter-spacing: .3px; }

.status { height: 25px; flex: none; display: flex; align-items: center; background: #434343; border-top: 1px solid #6a6a6a; }
.status span { width: 51px; letter-spacing: .4px; }
.status .f1 { margin-left: 21px; } .status .f2 { width: 101px; color: #b0b0b0; } .status .f3 { width: 53px; }
.gt { margin-right: 8px; } .status .f4 { width: 1155px; } .status .f5 { width: 55px; }
.ctrl { width: 430px; margin-right: -11px; } .ctrl text { fill: #c5c5c5; font-size: 17px; }
.status .dock { width: 38px; height: 24px; background: #5a5a5a; display: grid; place-items: center; }
```
